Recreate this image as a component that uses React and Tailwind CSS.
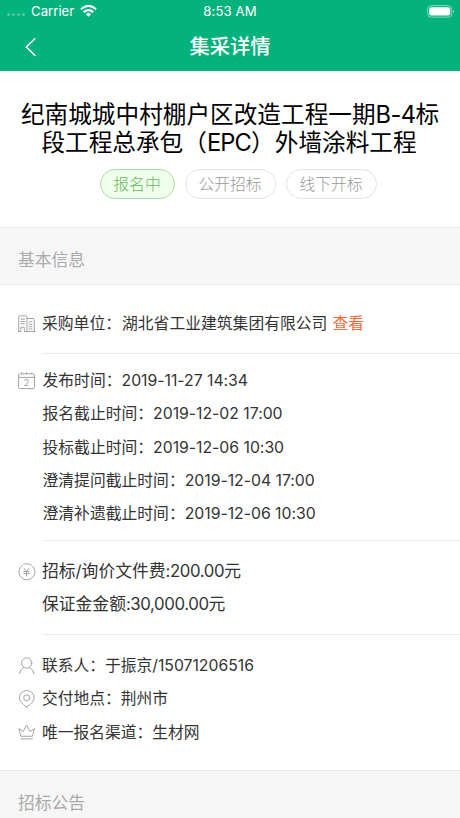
import React from 'react';

const stroke = { fill: 'none', stroke: 'currentColor', strokeWidth: 1, strokeLinecap: 'round', strokeLinejoin: 'round' };

function Icon({ children }) {
  return (
    <svg className="h-[18px] w-[18px] shrink-0 text-[#a3a3a3]" viewBox="0 0 18 18" {...stroke}>
      {children}
    </svg>
  );
}

const Building = () => (
  <Icon>
    <path d="M.7 16.5V2.2Q.7.8 2 .8H7.6Q9 .8 9 2.2V16.5M9 3.5H15Q16.3 3.5 16.3 4.8V16.5M0 16.5H2.8V12.2H6.3V16.5H17M3 4.2H6.5M3 6.5H6.5M3 8.8H6.5M11 6.8H14M11 9.3H14M11 11.8H14M11 14H14" />
  </Icon>
);
const CalendarIcon = () => (
  <Icon>
    <path d="M2.8 1.7H1.8Q.6 1.7 .6 2.9V15.4Q.6 16.6 1.8 16.6H15.2Q16.4 16.6 16.4 15.4V2.9Q16.4 1.7 15.2 1.7H14.2M5 1.7H7.5M9.6 1.7H12M.6 5.4H16.4M3.9.7V2.5M8.5.7V2.5M13.1.7V2.5" />
    <text x="8.6" y="14" textAnchor="middle" fontSize="9" stroke="none" fill="currentColor">2</text>
  </Icon>
);
const Yen = () => (
  <Icon>
    <path d="M4.2 2.3A8 8 0 1 0 8.5.8Q6.5.8 5.8 1.3" />
    <path d="M5.8 5L8.5 8.5L11.2 5M8.5 8.5V13M5.8 8.5H11.2M5.8 10.6H11.2" />
  </Icon>
);
const Person = () => (
  <Icon>
    <circle cx="8.7" cy="6" r="5.1" />
    <path d="M1.4 16.6Q2 12.5 5.8 10.4M11.6 10.4Q15.2 12.3 16 16.6" />
  </Icon>
);
const Pin = () => (
  <Icon>
    <path d="M8.7 17Q1.3 12.2 1.3 7.7A7.4 7.2 0 0 1 16.1 7.7Q16.1 12.2 8.7 17Z" />
    <circle cx="8.7" cy="7.8" r="3" />
  </Icon>
);
const Crown = () => (
  <Icon>
    <path d="M2.8 12.9L.8 5.5L5.2 8.6L8.6 2L12 8.6L16.5 5.5L14.5 12.9ZM2.8 15.9H14.5" />
  </Icon>
);

function Row({ icon, children, className = 'text-[15.75px]' }) {
  return (
    <div className="flex h-[33.35px] items-center">
      <div className="w-6 shrink-0">{icon}</div>
      <div className={'whitespace-nowrap text-[#333] ' + className}>{children}</div>
    </div>
  );
}

function DateRow({ icon, label, value }) {
  return (
    <Row icon={icon} className="pl-[0.5px] text-[15.8px]">
      {label}：<span className="tracking-[-0.02px]">{value}</span>
    </Row>
  );
}

function SectionHead({ children }) {
  return (
    <div className="h-[58px] border-y border-[#e9e9e9] bg-[#f6f6f6] pl-[18px] text-[16.8px] leading-[64px] text-[#aaa]">
      {children}
    </div>
  );
}

const Tag = ({ children, className }) => (
  <span className={'flex h-[30px] items-center justify-center rounded-full border pt-[2px] text-[15.8px] font-light ' + className}>
    {children}
  </span>
);

export default function App() {
  return (
    <div className="h-[818px] w-[460px] overflow-hidden bg-white font-['Inter','Noto_Sans_CJK_SC',sans-serif]">
      <header className="h-[71px] bg-[#04b27c] text-white">
        <div className="grid h-[22px] grid-cols-3 items-center pt-px text-[13.2px]">
          <div className="flex items-center pl-[7px]">
            <div className="mr-[6px] mt-[7px] flex gap-[2px]">
              {[0, 1, 2, 3].map((i) => <i key={i} className="size-[3px] rounded-full bg-white/30" />)}
            </div>
            <span>Carrier</span>
            <svg className="ml-[6px] h-3 w-[17px]" viewBox="0 0 17 12" fill="none" stroke="white" strokeWidth="2.1">
              <path d="M1 4.2Q8.5-2.4 16 4.2M3.8 7.1Q8.5 3.1 13.2 7.1" />
              <path d="M8.5 11.8L5.8 9.2Q8.5 7 11.2 9.2Z" fill="white" stroke="none" />
            </svg>
          </div>
          <div className="text-center tracking-[0.1px]">8:53 AM</div>
          <svg className="ml-auto mr-[5px] h-[13px] w-[28px]" viewBox="0 0 28 13">
            <rect x=".7" y=".7" width="24" height="11.4" rx="3.2" fill="none" stroke="white" strokeOpacity=".5" />
            <rect x="2.2" y="2.2" width="21" height="8.4" rx="2" fill="white" />
            <path d="M26 4.4Q28 6.4 26 8.4Z" fill="white" fillOpacity=".5" />
          </svg>
        </div>
        <div className="grid h-[49px] grid-cols-[60px_1fr_60px] items-center">
          <svg className="ml-[25px] h-[20px] w-[12px]" viewBox="0 0 12 20" fill="none" stroke="white" strokeWidth="1.6">
            <path d="M10.3 1.2L1.3 10L10.3 18.8" />
          </svg>
          <h1 className="text-center text-[20.3px] font-medium leading-[49px]">集采详情</h1>
        </div>
      </header>

      <section className="h-[156px] pt-[30px]">
        <h2 className="whitespace-nowrap text-center text-[23.65px] leading-[28px] text-black">
          纪南城城中村棚户区改造工程一期<span className="tracking-[-0.6px]">B-4</span>标<br />
          <span className="mr-[2px]">段工程总承包（<span className="tracking-[-0.8px]">EPC</span>）外墙涂料工程</span>
        </h2>
        <div className="mt-[12px] flex justify-center gap-[10px] pl-[16px]">
          <Tag className="w-[75px] border-[#a9dc9f] bg-[#f0ffec] text-[#68b85c]">报名中</Tag>
          <Tag className="w-[91px] border-[#e4e4e4] text-[#999]">公开招标</Tag>
          <Tag className="w-[91px] border-[#e4e4e4] text-[#999]">线下开标</Tag>
        </div>
      </section>

      <SectionHead>基本信息</SectionHead>

      <section className="h-[485px] pl-[18px]">
        <div className="h-[68px] pt-[22px]">
          <Row icon={<Building />} className="text-[15.8px]">
            采购单位：<span className="ml-[1px]">湖北省工业建筑集团有限公司</span><span className="ml-[5px] text-[#f4693c]">查看</span>
          </Row>
        </div>
        <div className="ml-6 h-px bg-[#ececec]" />
        <div className="h-[186px] pt-[10px]">
          <DateRow icon={<CalendarIcon />} label="发布时间" value="2019-11-27 14:34" />
          <DateRow label="报名截止时间" value="2019-12-02 17:00" />
          <DateRow label="投标截止时间" value="2019-12-06 10:30" />
          <DateRow label="澄清提问截止时间" value="2019-12-04 17:00" />
          <DateRow label="澄清补遗截止时间" value="2019-12-06 10:30" />
        </div>
        <div className="ml-6 h-px bg-[#ececec]" />
        <div className="h-[93px] pt-[14px]">
          <Row icon={<Yen />} className="text-[16.8px]">招标/询价文件费<span className="tracking-[-0.4px]">:200.00</span>元</Row>
          <Row className="text-[16.8px]">保证金金额<span className="tracking-[-0.4px]">:30,000.00</span>元</Row>
        </div>
        <div className="ml-6 h-px bg-[#ececec]" />
        <div className="pt-[14px]">
          <Row icon={<Person />}>联系人：于振京/15071206516</Row>
          <Row icon={<Pin />}>交付地点：荆州市</Row>
          <Row icon={<Crown />}>唯一报名渠道：生材网</Row>
        </div>
      </section>

      <SectionHead>招标公告</SectionHead>
    </div>
  );
}
